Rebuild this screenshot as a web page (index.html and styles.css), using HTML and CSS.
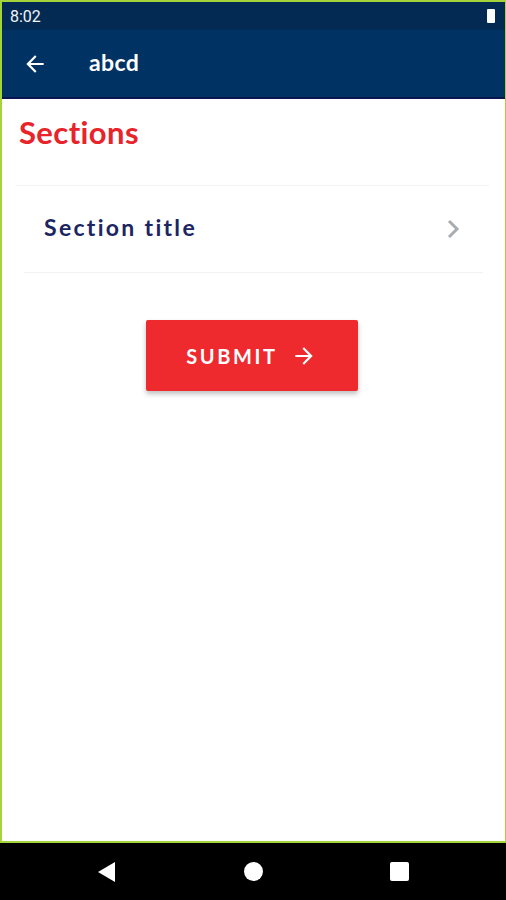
FILE: index.html
```html
<!DOCTYPE html>
<html>
<head>
<meta charset="utf-8">
<link rel="stylesheet" href="styles.css">
</head>
<body>
<div class="phone">
  <div class="screen">
    <div class="statusbar">
      <span class="time">8:02</span>
      <span class="battery"></span>
    </div>
    <div class="appbar">
      <svg class="back" width="26" height="26" viewBox="0 0 24 24"><path d="M20 11H7.83l5.59-5.59L12 4l-8 8 8 8 1.41-1.41L7.83 13H20v-2z" fill="#fff"/></svg>
      <span class="title">abcd</span>
    </div>
    <div class="content">
      <h1 class="heading">Sections</h1>
      <div class="divider top"></div>
      <div class="row">
        <span class="row-label">Section title</span>
        <svg class="chev" width="14" height="22" viewBox="0 0 14 22"><path d="M3 3l8 8-8 8" fill="none" stroke="#a9adb1" stroke-width="3"/></svg>
      </div>
      <div class="divider bottom"></div>
      <div class="btn-wrap">
        <button class="submit">SUBMIT
          <svg width="26" height="26" viewBox="0 0 24 24"><path d="M12 4l-1.41 1.41L16.17 11H4v2h12.17l-5.58 5.59L12 20l8-8z" fill="#fff"/></svg>
        </button>
      </div>
    </div>
  </div>
  <div class="navbar">
    <svg width="20" height="22" viewBox="0 0 20 22"><path d="M18 1v20L1 11z" fill="#fff"/></svg>
    <span class="home"></span>
    <span class="recent"></span>
  </div>
</div>
</body>
</html>
```
FILE: styles.css
```css
* { box-sizing: border-box; margin: 0; padding: 0; }
html, body { width: 506px; height: 900px; overflow: hidden; }
body { font-family: "Lato", "Noto Sans", sans-serif; background: #000; }
.phone { display: flex; flex-direction: column; height: 900px; }
.screen {
  height: 843px;
  display: flex;
  flex-direction: column;
  background: #fff;
  border-style: solid;
  border-color: #a4d43a;
  border-width: 2px 1px 2px 2px;
}
.statusbar {
  height: 28px;
  background: #022a52;
  display: flex;
  align-items: center;
  justify-content: space-between;
  padding: 0 10px 0 8px;
}
.time { font-family: "Roboto", sans-serif; color: #f2f4f7; font-size: 16px; }
.battery { width: 8px; height: 14px; background: #fff; border-radius: 1px; }
.appbar {
  height: 69px;
  background: #013264;
  border-bottom: 2px solid #0c1550;
  display: flex;
  align-items: center;
  padding-left: 20px;
}
.back { margin-right: 41px; }
.title { color: #fff; font-weight: 700; font-size: 23px; letter-spacing: 0.4px; margin-top: -3px; }
.content { flex: 1; display: flex; flex-direction: column; }
.heading {
  color: #e8232a;
  font-size: 31px;
  font-weight: 700;
  padding: 14px 0 0 17px;
  height: 86px;
  letter-spacing: 0.4px;
}
.divider { height: 1px; background: #f1f2f3; }
.divider.top { margin: 0 16px 0 14px; }
.divider.bottom { margin: 0 22px 0 22px; }
.row {
  height: 86px;
  display: flex;
  align-items: center;
  justify-content: space-between;
  padding: 0 45px 4px 42px;
}
.row-label { color: #1b2561; font-size: 23px; font-weight: 700; letter-spacing: 2.3px; }
.chev { margin-top: 4px; }
.btn-wrap { display: flex; justify-content: center; padding-top: 47px; padding-right: 4px; }
.submit {
  width: 212px;
  height: 71px;
  background: #ee2a2f;
  border: none;
  border-radius: 2px;
  color: #fff;
  font-family: "Lato", "Noto Sans", sans-serif;
  font-weight: 700;
  font-size: 20px;
  letter-spacing: 2.6px;
  display: flex;
  align-items: center;
  justify-content: center;
  gap: 13px;
  box-shadow: 0 3px 5px rgba(0,0,0,0.25);
}
.navbar {
  flex: 1;
  background: #000;
  display: flex;
  align-items: center;
  justify-content: space-between;
  padding: 0 97px 0 97px;
}
.home { width: 19px; height: 19px; border-radius: 50%; background: #fff; }
.recent { width: 19px; height: 19px; background: #fff; border-radius: 2px; }
```
